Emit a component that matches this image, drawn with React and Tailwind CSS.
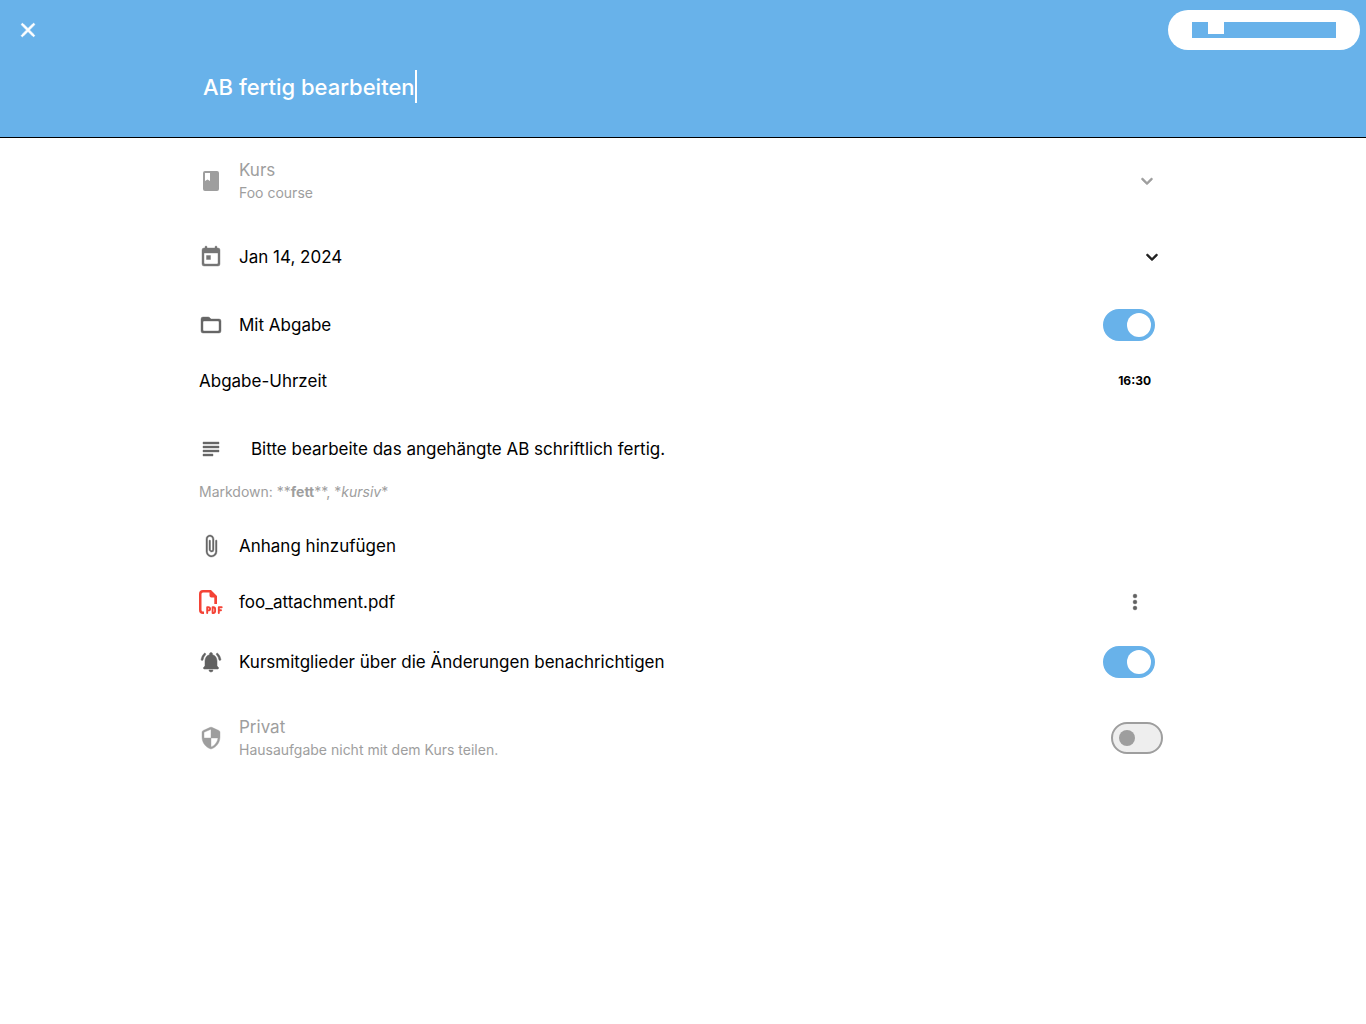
import { useState } from "react";

function Icon({ d, className = "", weight = 0, children }) {
  return (
    <svg viewBox="0 0 24 24" className={`size-6 shrink-0 fill-current ${className}`} aria-hidden="true">
      {d ? <path d={d} stroke="currentColor" strokeWidth={weight} strokeLinejoin="round" /> : children}
    </svg>
  );
}

const paths = {
  course:
    "M18 2H6a2 2 0 0 0-2 2v16a2 2 0 0 0 2 2h12a2 2 0 0 0 2-2V4a2 2 0 0 0-2-2zM6 4h5v8l-2.500-1.500L6 12V4z",
  date:
    "M19 3h-1V2a1 1 0 0 0-2 0v1H8V2a1 1 0 0 0-2 0v1H5a2 2 0 0 0-2 2v14a2 2 0 0 0 2 2h14a2 2 0 0 0 2-2V5a2 2 0 0 0-2-2zm-1 16H6a1 1 0 0 1-1-1V8h14v10a1 1 0 0 1-1 1zM7.500 10.500h4v4h-4z",
  folder:
    "M20 6h-8l-1.400-1.400A2 2 0 0 0 9.170 4H4a2 2 0 0 0-2 2v12a2 2 0 0 0 2 2h16a2 2 0 0 0 2-2V8a2 2 0 0 0-2-2zm-1 12H5a1 1 0 0 1-1-1V9a1 1 0 0 1 1-1h14a1 1 0 0 1 1 1v8a1 1 0 0 1-1 1z",
  subject: "M14 17H4v2h10v-2zm6-8H4v2h16V9zM4 15h16v-2H4v2zM4 5v2h16V5H4z",
  attach:
    "M16.500 6.750v10.580c0 2.090-1.530 3.950-3.610 4.150A4.010 4.010 0 0 1 8.500 17.500V5.140c0-1.310.940-2.500 2.240-2.630A2.500 2.500 0 0 1 13.500 5v10.500c0 .550-.450 1-1 1s-1-.450-1-1V6.750a.750.750 0 0 0-1.500 0v8.610c0 1.310.940 2.500 2.240 2.630A2.500 2.500 0 0 0 15 15.500V5.170c0-2.090-1.530-3.950-3.610-4.150A4 4 0 0 0 7 5v12.270c0 2.870 2.100 5.440 4.960 5.710A5.500 5.500 0 0 0 18 17.500V6.750a.750.750 0 0 0-1.500 0z",
  bell:
    "M6.470 4.810c.370-.380.350-.990-.030-1.370a.980.980 0 0 0-1.360.020 10.500 10.500 0 0 0-2.980 5.890.990.990 0 0 0 .980 1.150c.490 0 .910-.350.980-.840a8.440 8.440 0 0 1 2.410-4.850zM18.920 3.460a1 1 0 0 0-1.370-.020.970.970 0 0 0-.020 1.360 8.550 8.550 0 0 1 2.410 4.850c.070.490.490.840.980.840.600 0 1.070-.550.980-1.150a10.600 10.600 0 0 0-2.980-5.880zM18 11c0-3.070-1.640-5.640-4.500-6.320V4a1.500 1.500 0 0 0-3 0v.680C7.630 5.360 6 7.920 6 11v5l-1.290 1.290a1 1 0 0 0 .7 1.710h13.170a1 1 0 0 0 .7-1.710L18 16v-5zM12 22a2 2 0 0 0 2-2h-4c0 1.100.890 2 2 2z",
  shield:
    "M11.190 1.360l-7 3.110A2 2 0 0 0 3 6.300V11c0 5.550 3.840 10.740 9 12 5.160-1.260 9-6.450 9-12V6.300a2 2 0 0 0-1.190-1.830l-7-3.110a2 2 0 0 0-1.620 0zM12 11.990h7c-.530 4.120-3.280 7.790-7 8.940V12H5V6.300l7-3.110v8.800z",
  chevron:
    "M8.120 9.290L12 13.170l3.880-3.880a1 1 0 0 1 1.410 1.410l-4.590 4.590a1 1 0 0 1-1.410 0L6.700 10.700a1 1 0 0 1 1.420-1.410z",
  more:
    "M12 8a2 2 0 1 0 0-4 2 2 0 0 0 0 4zm0 2a2 2 0 1 0 0 4 2 2 0 0 0 0-4zm0 6a2 2 0 1 0 0 4 2 2 0 0 0 0-4z",
  close:
    "M18.300 5.710a1 1 0 0 0-1.410 0L12 10.590 7.110 5.700A1 1 0 0 0 5.700 7.110L10.590 12 5.700 16.890a1 1 0 1 0 1.410 1.410L12 13.410l4.890 4.890a1 1 0 0 0 1.410-1.410L13.410 12l4.890-4.890a1 1 0 0 0 0-1.400z",
};

function PdfIcon() {
  return (
    <Icon className="text-[#f44336]">
      <path d="M4 0h8l6 6v8h-2.700V7.500h-3A1.800 1.800 0 0 1 10.500 5.700V2.500H4A1.500 1.500 0 0 0 2.500 4v16A1.500 1.500 0 0 0 4 21.500h1V24H4a4 4 0 0 1-4-4V4a4 4 0 0 1 4-4z" />
      <g fill="none" stroke="currentColor" strokeWidth="1.900" strokeLinecap="round" strokeLinejoin="round">
        <path d="M8.200 23v-5.800h1.300a1.600 1.600 0 0 1 0 3.200H8.200" />
        <path d="M13.600 17.200V23h.8a1.700 1.700 0 0 0 1.700-1.700v-2.400a1.700 1.700 0 0 0-1.700-1.700z" />
        <path d="M19.800 23v-5.800h2.900M19.800 20.200h2.200" />
      </g>
    </Icon>
  );
}

function Switch({ id, defaultChecked, disabled }) {
  return (
    <label htmlFor={id} className="flex shrink-0">
      <input id={id} type="checkbox" role="switch" defaultChecked={defaultChecked} disabled={disabled} className="peer sr-only" />
      <span className="flex h-8 w-[52px] items-center rounded-full border-2 border-[#9e9e9e] bg-[#eeeeee] pl-1.5 before:size-4 before:rounded-full before:bg-[#9e9e9e] peer-checked:justify-end peer-checked:border-[#68b2ea] peer-checked:bg-[#68b2ea] peer-checked:pr-0.5 peer-checked:before:size-6 peer-checked:before:bg-white" />
    </label>
  );
}

export default function App() {
  const [title, setTitle] = useState("AB fertig bearbeiten");
  return (
    <div className="min-h-screen bg-white font-['Inter',sans-serif] text-[17px] leading-6 text-black">
      <header className="border-b border-black bg-[#68b2ea] pb-[34px] text-white">
        <div className="flex items-start justify-between pt-2.5 pr-1.5 pl-4">
          <button type="button" aria-label="Schließen" className="flex h-10 items-center">
            <Icon d={paths.close} weight={0.8} />
          </button>
          <button type="button" aria-label="Speichern" className="flex h-10 items-center rounded-full bg-white px-6">
            <span className="flex h-4 w-36 bg-[#68b2ea] pl-4">
              <span className="h-3 w-4 bg-white" />
            </span>
          </button>
        </div>
        <div className="mx-auto mt-5 flex max-w-[1000px] items-center px-5">
          <input
            aria-label="Titel"
            value={title}
            onChange={(e) => setTitle(e.target.value)}
            className="field-sizing-content bg-transparent text-[22px] leading-8 font-medium caret-transparent outline-none"
          />
          <span className="h-[33px] w-0.5 bg-white" />
        </div>
      </header>

      <main className="mx-auto max-w-[1000px] px-4">
        <button type="button" disabled className="flex h-[86px] w-full items-center gap-4 pr-2 text-left text-[#9e9e9e]">
          <Icon d={paths.course} />
          <span className="flex grow flex-col">
            <span>Kurs</span>
            <span className="text-sm leading-[22px]">Foo course</span>
          </span>
          <Icon d={paths.chevron} weight={0.5} />
        </button>

        <button type="button" className="flex h-[66px] w-full items-center gap-4 pr-[3px] text-left">
          <Icon d={paths.date} weight={0.4} className="text-[#757575]" />
          <span className="grow">Jan 14, 2024</span>
          <Icon d={paths.chevron} weight={0.5} className="text-[#212121]" />
        </button>

        <div className="mt-[7px] flex h-14 items-center gap-4 pr-3">
          <Icon d={paths.folder} weight={0.4} className="text-[#666666]" />
          <label htmlFor="submission" className="grow">Mit Abgabe</label>
          <Switch id="submission" defaultChecked />
        </div>

        <div className="flex h-14 items-center justify-between pr-4">
          <span>Abgabe-Uhrzeit</span>
          <button type="button" className="text-xs font-bold">16:30</button>
        </div>

        <div className="mt-4 flex h-12 items-center gap-7">
          <Icon d={paths.subject} weight={0.4} className="text-[#666666]" />
          <input
            aria-label="Beschreibung"
            defaultValue="Bitte bearbeite das angehängte AB schriftlich fertig."
            className="grow bg-transparent outline-none"
          />
        </div>
        <p className="mt-[7px] text-sm leading-6 text-[#9e9e9e]">
          Markdown: **<strong>fett</strong>**, *<em>kursiv</em>*
        </p>

        <button type="button" className="mt-3.5 flex h-14 w-full items-center gap-4 text-left">
          <Icon d={paths.attach} weight={0.4} className="text-[#666666]" />
          Anhang hinzufügen
        </button>

        <div className="flex h-14 items-center gap-4 pr-5">
          <PdfIcon />
          <span className="grow">foo_attachment.pdf</span>
          <button type="button" aria-label="Weitere Optionen">
            <Icon d={paths.more} weight={0.3} className="text-[#616161]" />
          </button>
        </div>

        <div className="mt-1 flex h-14 items-center gap-4 pr-3">
          <Icon d={paths.bell} weight={0.5} className="text-[#616161]" />
          <label htmlFor="notify" className="grow">Kursmitglieder über die Änderungen benachrichtigen</label>
          <Switch id="notify" defaultChecked />
        </div>

        <div className="mt-1 flex h-[88px] items-center gap-4 pr-1 text-[#9e9e9e]">
          <Icon d={paths.shield} weight={0.4} />
          <label htmlFor="private" className="flex grow flex-col">
            <span>Privat</span>
            <span className="text-sm leading-[22px]">Hausaufgabe nicht mit dem Kurs teilen.</span>
          </label>
          <Switch id="private" disabled />
        </div>
      </main>
    </div>
  );
}
